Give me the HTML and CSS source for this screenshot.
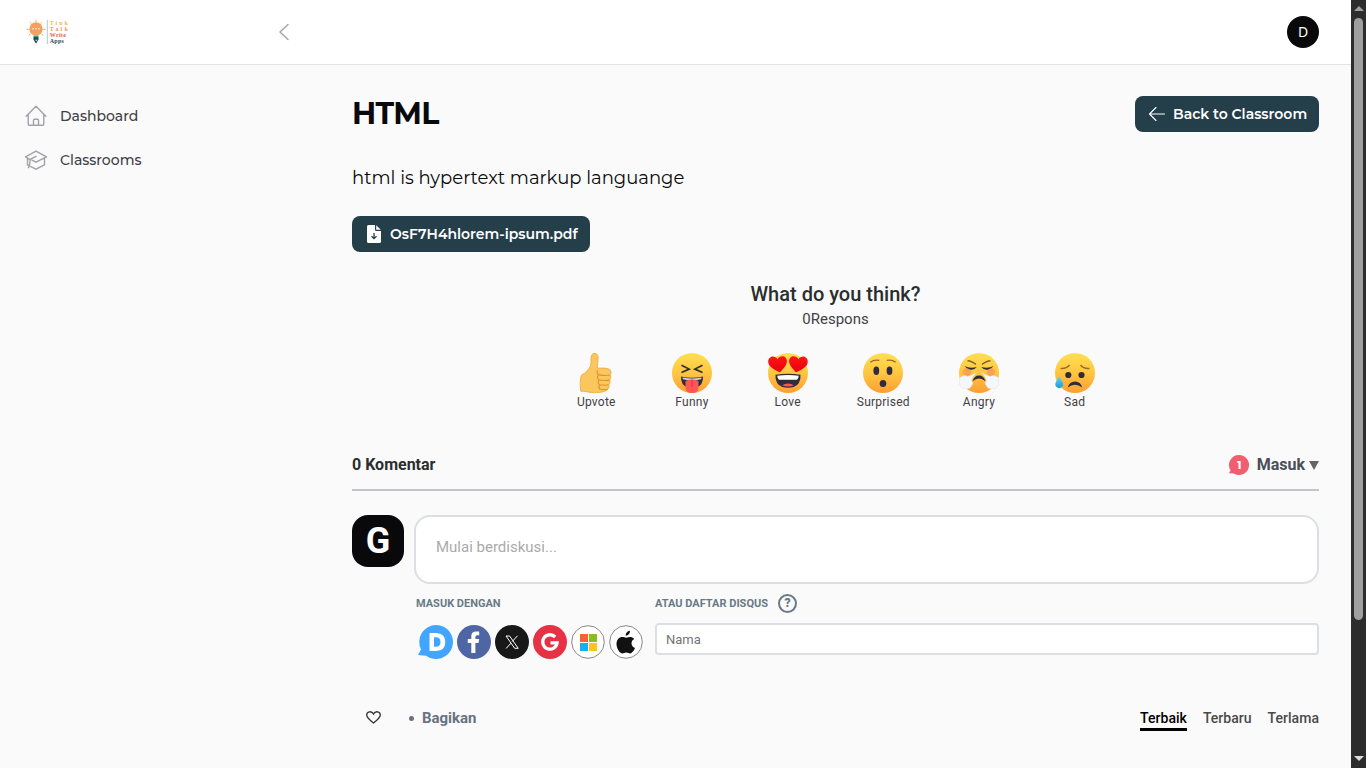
FILE: index.html
```html
<!DOCTYPE html>
<html lang="id">
<head>
<meta charset="utf-8">
<title>HTML</title>
<link rel="stylesheet" href="styles.css">
</head>
<body>
<svg width="0" height="0" class="defs" aria-hidden="true">
  <defs>
    <linearGradient id="face" x1="0" y1="0" x2="0" y2="1"><stop offset="0" stop-color="#ffdf52"/><stop offset=".5" stop-color="#ffc640"/><stop offset="1" stop-color="#ff9e35"/></linearGradient>
    <linearGradient id="heart" x1="0" y1="0" x2="0" y2="1"><stop offset="0" stop-color="#ff1515"/><stop offset="1" stop-color="#e9000d"/></linearGradient>
    <linearGradient id="drop" x1="0" y1="0" x2="0" y2="1"><stop offset="0" stop-color="#68d7f6"/><stop offset="1" stop-color="#159fd8"/></linearGradient>
  </defs>
</svg>
<div class="window">
  <div class="page">
    <header class="topbar">
      <svg class="logo" width="48" height="28" viewBox="0 0 48 28">
        <g stroke="#f1a35f" stroke-width="1"><path d="M10 1.800v2M4 4.200l1.300 1.300M16 4.200l-1.300 1.300M.5 11.300h2.200M17.200 11.300h2.300M2.700 17.200l1.700-1.200M17.300 17.200L15.600 16"/></g>
        <circle cx="10" cy="11" r="6.700" fill="#f6a05f"/>
        <path d="M7 15h6l-1 4H8z" fill="#f6a05f"/>
        <g fill="#fff"><circle cx="7.100" cy="10.800" r=".8"/><circle cx="10" cy="10.800" r=".8"/><circle cx="12.900" cy="10.800" r=".8"/></g>
        <path d="M7.500 19h5v2.300L10 25.800l-2.500-4.300z" fill="#264653"/>
        <path d="M7.500 18.600h5" stroke="#2a9d8f" stroke-width="1"/><circle cx="10.200" cy="22.200" r=".8" fill="#dce7e8"/>
        <path d="M21.300 2v24" stroke="#a5d1cb" stroke-width="1"/>
        <g class="logo-text"><text x="23.800" y="7" textLength="18" fill="#e9b95a">Tink</text><text x="23.800" y="13" textLength="18" fill="#f4975a">Talk</text><text x="23.800" y="19" textLength="16" fill="#e45f41">Write</text><text x="23.800" y="24.500" textLength="14" fill="#264653">Apps</text></g>
      </svg>
      <svg class="collapse" width="12" height="18" viewBox="0 0 12 18" fill="none" stroke="#a1a1aa" stroke-width="1.4" stroke-linecap="round" stroke-linejoin="round"><path d="M10 1.5L2 9l8 7.5"/></svg>
      <div class="user">D</div>
    </header>
    <div class="body">
      <nav class="sidebar">
        <a class="nav-item"><svg width="24" height="24" viewBox="0 0 24 24" fill="none" stroke="#a1a1aa" stroke-width="1.4" stroke-linecap="round" stroke-linejoin="round"><path d="M2.200 12.200L12 2.300l9.800 9.900M4.200 10.500v9.600q0 1.200 1.200 1.200h13.200q1.200 0 1.200-1.200v-9.600M9.500 21.200v-5q0-1 1-1h3q1 0 1 1v5"/></svg><span>Dashboard</span></a>
        <a class="nav-item"><svg width="24" height="24" viewBox="0 0 24 24" fill="none" stroke="#a1a1aa" stroke-width="1.4" stroke-linecap="round" stroke-linejoin="round"><path d="M1.500 8.800L12 3.200l10.500 5.600L12 14.200 8 12.200M1.500 8.800l4.200 2.500M3.500 10.300v6.300l1.200 1M20.500 10.300v6.500L12 21.200l-5.200-2.600M12 8.300l-4.500 2.400q-1.500.8-1.600 2.600l-.3 3.500q-.2 1.500-1.100 2.900"/></svg><span>Classrooms</span></a>
      </nav>
      <main class="main">
        <div class="title-row">
          <h1>HTML</h1>
          <a class="btn back"><svg width="18" height="16" viewBox="0 0 18 16" fill="none" stroke="#fff" stroke-width="1.1" stroke-linecap="round" stroke-linejoin="round"><path d="M8 1.500L1.500 8 8 14.500M1.500 8H16.500"/></svg><span>Back to Classroom</span></a>
        </div>
        <p class="intro">html is hypertext markup languange</p>
        <a class="btn file"><svg width="14" height="18" viewBox="0 0 14 18"><path fill="#fff" d="M1.500 0H8v4.500Q8 6 9.500 6H14v10.500q0 1.500-1.500 1.500h-11Q0 18 0 16.500V1.500Q0 0 1.500 0zM9.200.2L13.800 4.800H9.800q-.6 0-.6-.6z"/><path d="M7 8v5.500M4.500 11.200L7 13.700l2.500-2.500" fill="none" stroke="#243e4a" stroke-width="1.300"/></svg><span>OsF7H4hlorem-ipsum.pdf</span></a>

        <section class="reactions">
          <h2>What do you think?</h2>
          <div class="count">0Respons</div>
          <div class="reaction-list">
            <div class="reaction"><svg width="40" height="40" viewBox="0 0 40 40"><g transform="translate(1.200 .3)"><path d="M15.600.5c3-1.300 5.400.4 5.300 4-.1 3.700-1 7.300-.6 10.400 4.500-.2 9.300-.5 12.200 1.300 2 1.400 1.700 4.300.2 5.400 1.300 1.400 1.100 4-.4 5.100 1.100 1.500.7 3.800-.8 4.700.8 1.600.2 3.600-1 4.500-1.500 2.700-7.800 3.400-13.300 3.400-6.400 0-10.200-2-13.500-1.200C2.600 34.500 2.700 25.600 4.200 22c3.800-2 6.800-5.300 8.800-8.700 1.900-3.700-.6-10.900 2.600-12.800z" fill="#fbc65d" stroke="#e9a93b" stroke-width=".8"/><path d="M33 21.700q-5 1-11-.1-3-1.400-1.700-4.700M32.600 26.800q-5 .8-10.700-.1-2.600-2.200-.8-4.900M31.800 31.500q-4 .8-9.300 0-2.500-2.100-.8-4.600M30.800 36q-4 .5-7.900 0-2.300-1.800-.5-4.300" fill="none" stroke="#dd942c" stroke-width="1.100"/></g></svg><span>Upvote</span></div>
            <div class="reaction"><svg width="40" height="40" viewBox="0 0 40 40"><circle cx="20" cy="20" r="20" fill="url(#face)"/><path d="M9.500 12.200l7.700 3.900-7.700 3.500M30.500 12.200l-7.700 3.900 7.700 3.500" fill="none" stroke="#302c3b" stroke-width="1.700"/><path d="M9 23.400q11 2.600 22 0 .5 8.700-7 11.200h-8Q8.500 32.100 9 23.400z" fill="#302c3b"/><path d="M10.500 24.500q9.500 1.800 19 0l-.3 1.800q-9.200 1.700-18.400 0z" fill="#d8d8dc"/><path d="M13.500 28q6.500-3.500 13 0v6q0 6-6.500 6t-6.500-6z" fill="#ff5655"/><path d="M20 27v7" stroke="#c83f45" stroke-width="1.200"/></svg><span>Funny</span></div>
            <div class="reaction"><svg width="40" height="40" viewBox="0 0 40 40"><circle cx="20" cy="20" r="20" fill="url(#face)"/><g fill="url(#heart)"><path d="M12 19.200C7 17.100 1 14.300.3 9.500-.6 3.500 6.400 1 9.600 6.200 12.500 1.200 19.400 3 18.900 8.700c-.4 4.100-4.400 7.900-6.900 10.500z"/><path d="M28 19.200c5-2.100 11-4.900 11.700-9.700.9-6-6.100-8.500-9.300-3.300-2.900-5-9.800-3.200-9.300 2.500.4 4.100 4.400 7.900 6.900 10.500z"/></g><path d="M7.500 21.700q12.500-1.700 25 0Q33 34.500 20 34.800 7 34.500 7.500 21.700z" fill="#302c3b"/><path d="M9.300 22.700q10.700-1.300 21.400 0-.1 3-1.700 4H11q-1.600-1-1.700-4z" fill="#fff"/><path d="M14 32.200q6-3.200 12 0-6 2.600-12 0z" fill="#ff5655"/></svg><span>Love</span></div>
            <div class="reaction"><svg width="40" height="40" viewBox="0 0 40 40"><circle cx="20" cy="20" r="20" fill="url(#face)"/><g fill="#302c3b"><ellipse cx="13.300" cy="17.800" rx="2.900" ry="4.200"/><ellipse cx="26.500" cy="17.800" rx="2.900" ry="4.200"/><ellipse cx="20" cy="30.500" rx="3.300" ry="3.600"/></g><path d="M7.300 9.200q3.800-3 9-1.800M32.700 9.200q-3.800-3-9-1.800" fill="none" stroke="#9c6928" stroke-width="1.300"/></svg><span>Surprised</span></div>
            <div class="reaction"><svg width="40" height="40" viewBox="0 0 40 40"><circle cx="20" cy="20" r="20" fill="url(#face)"/><circle cx="8" cy="19" r="4" fill="#fb875d" opacity=".6"/><circle cx="32" cy="19" r="4" fill="#fb875d" opacity=".6"/><path d="M8.500 7.700q3.800.1 8.500 3.700M31.500 7.700q-3.800.1-8.500 3.700" fill="none" stroke="#87602a" stroke-width="1.400"/><path d="M5.500 13q5 2.700 12.300 1Q15 17.500 11 16.500 7.500 16 5.500 13zM34.500 13q-5 2.700-12.300 1Q25 17.500 29 16.500q3.500-.5 5.500-3.500z" fill="#302c3b"/><path d="M17.500 19.500q-5 3-9 4-2.500-2-5.500-.3Q-1 25 .7 28.500-1.500 32 2 33.800 3.500 37 6.500 35.500q4.700 1.100 6-2.800 2.500-2.200 0-5 .5-3.200 5-8.200zM22.500 19.500q5 3 9 4 2.500-2 5.500-.3 4 1.800 2.300 5.300 2.200 3.500-1.300 5.300-1.500 3.200-4.500 1.700-4.700 1.100-6-2.800-2.500-2.200 0-5-.5-3.200-5-8.200z" fill="#f4f7fb" stroke="#d8e0ea" stroke-width=".4"/><path d="M13.500 28.200q1.700-5.700 6.500-5.700t6.500 5.700q-6.500-5.400-13 0z" fill="#302c3b"/></svg><span>Angry</span></div>
            <div class="reaction"><svg width="40" height="40" viewBox="0 0 40 40"><circle cx="20" cy="20" r="20" fill="url(#face)"/><g fill="#302c3b"><circle cx="13.300" cy="22" r="3.100"/><circle cx="26.500" cy="22" r="3.100"/><path d="M12.700 34.600q1.700-6 7.300-6t7.300 6q-7.300-5.800-14.600 0z"/></g><path d="M5.500 15.500q5.900.5 9-3.500M34.500 15.500q-5.900.5-9-3.500" fill="none" stroke="#9c6928" stroke-width="1.400"/><path d="M4.500 23c-2.300 4-4.200 6.200-4.200 8.300 0 5.100 7.900 5.100 7.900 0 0-2.100-2.200-4.400-3.700-8.300z" fill="url(#drop)"/></svg><span>Sad</span></div>
          </div>
        </section>

        <section class="comments">
          <div class="comments-head">
            <strong>0 Komentar</strong>
            <div class="login"><svg class="badge" width="20" height="20" viewBox="0 0 20 20"><path d="M10 0a10 10 0 1 1-5.200 18.500L0 18.300l1.500-3A10 10 0 0 1 10 0z" fill="#f05f70"/><text x="10.400" y="13.800" text-anchor="middle" class="badge-number">1</text></svg><strong>Masuk</strong><i class="caret"></i></div>
          </div>
          <div class="composer">
            <div class="avatar">G</div>
            <div class="editor">Mulai berdiskusi...</div>
          </div>
          <div class="auth">
            <div class="connect">
              <h3><span>Masuk dengan</span></h3>
              <div class="providers">
                <svg width="36" height="34" viewBox="0 0 36 34"><path d="M19 0a17 17 0 1 1-10 30.700L1 30l3-5.500A17 17 0 0 1 19 0z" fill="#42a5ff"/><path fill-rule="evenodd" fill="#fff" d="M12.500 8H19q9.300.3 9.300 9T19 26h-6.500zM17 12.300v9.400h2q4.500 0 4.500-4.700T19 12.300z"/></svg>
                <svg width="34" height="34" viewBox="0 0 34 34"><circle cx="17" cy="17" r="17" fill="#4f66a5"/><path d="M14.300 28V18h-3.500v-4h3.500v-3q0-4.500 4.700-4.500h3.200v3.800H20q-1.600 0-1.600 1.700v2h3.800l-.6 4h-3.200v10z" fill="#fff"/></svg>
                <svg width="34" height="34" viewBox="0 0 34 34"><circle cx="17" cy="17" r="17" fill="#181818"/><path d="M11 11h3.600l8.600 12.300h-3.500zM22.500 10.800l-5.300 5.700M15.900 18.200l-4.800 5.300" fill="none" stroke="#fff" stroke-width="1"/></svg>
                <svg width="34" height="34" viewBox="0 0 34 34"><circle cx="17" cy="17" r="17" fill="#e63244"/><path d="M22.200 12A7.200 7.200 0 1 0 24.100 17.800H17.500" fill="none" stroke="#fff" stroke-width="3.300"/></svg>
                <svg width="34" height="34" viewBox="0 0 34 34"><circle cx="17" cy="17" r="16.300" fill="#fff" stroke="#888" stroke-width="1"/><path fill="#f1643a" d="M9 9h8v8H9z"/><path fill="#8cbd19" d="M18 9h8v8h-8z"/><path fill="#1cacf3" d="M9 18h8v8H9z"/><path fill="#ffc31e" d="M18 18h8v8h-8z"/></svg>
                <svg width="34" height="34" viewBox="0 0 34 34"><circle cx="17" cy="17" r="16.300" fill="#fff" stroke="#888" stroke-width="1"/><path transform="translate(-.3 -.3)" d="M21.200 6c.3 2.500-1.500 4.800-4.200 5-.2-2.400 1.700-4.700 4.200-5zM25.500 14.400c-4 2.200-3.300 7.500.8 9-1.300 3.200-3.200 5.300-4.900 5.300-1.400 0-2.100-.8-3.900-.8s-2.500.8-3.900.8c-3.200 0-8.400-9-4.200-14.400 2.600-3.300 6.200-1.900 8.100-1.200 2.300-.8 5.700-1.900 8 1.300z" fill="#111"/></svg>
              </div>
            </div>
            <div class="guest">
              <h3><span>atau daftar Disqus</span> <b class="help">?</b></h3>
              <input class="name" type="text" placeholder="Nama">
            </div>
          </div>
          <div class="tools">
            <div class="share"><svg class="like" width="15" height="13" viewBox="0 0 15 13"><path d="M7.500 12C3 8.500.7 6.500.7 4c0-3.800 5-4.400 6.800-1 1.800-3.400 6.800-2.800 6.800 1 0 2.500-2.300 4.500-6.800 8z" fill="none" stroke="#333" stroke-width="1.300"/></svg><i class="dot"></i><strong>Bagikan</strong></div>
            <div class="sort"><span class="active">Terbaik</span><span>Terbaru</span><span>Terlama</span></div>
          </div>
        </section>
      </main>
    </div>
  </div>
  <div class="scrollbar"><i class="up"></i><div class="thumb"></div><i class="down"></i></div>
</div>
</body>
</html>
```
FILE: styles.css
```css
* { box-sizing: border-box; }
body { margin: 0; background: #fafafa; color: #3f3f46; font-family: Roboto, "Liberation Sans", sans-serif; overflow: hidden; }
h1, h2, h3, p { margin: 0; }
svg { display: block; flex: none; overflow: visible; }
.defs { position: absolute; }
.window { display: flex; height: 768px; }
.page { flex: 1; min-width: 0; }

.topbar { height: 65px; display: flex; align-items: center; padding: 0 32px 1px 26px; background: #fff; border-bottom: 1px solid #e4e4e7; }
.logo-text { font: bold 6px "Liberation Serif", serif; stroke-width: 0; }
.collapse { margin-left: 204px; }
.user { margin-left: auto; width: 32px; height: 32px; border-radius: 50%; background: #09090b; color: #fff; display: grid; place-items: center; font: 14px/1 "Noto Sans", sans-serif; }

.body { display: flex; }
.sidebar { width: 320px; padding: 39px 24px; display: flex; flex-direction: column; gap: 20px; }
.nav-item { display: flex; align-items: center; gap: 12px; height: 24px; font: 500 14px/24px Montserrat, Inter, sans-serif; color: #3f3f46; }
.main { flex: 1; min-width: 0; padding: 31px 32px 0; }
.title-row { display: flex; justify-content: space-between; height: 36px; }
h1 { font: 700 30px/36px Montserrat, Inter, sans-serif; letter-spacing: -.75px; color: #09090b; }
.btn { display: flex; align-items: center; height: 36px; border-radius: 8px; background: #243e4a; color: #fff; font: 600 14px/20px Montserrat, Inter, sans-serif; white-space: nowrap; }
.back { width: 184px; padding-left: 13px; gap: 7px; }
.file { width: 238px; padding-left: 15px; gap: 9px; }
.intro { margin: 32px 0 24px; font: 400 18px/28px Montserrat, Inter, sans-serif; color: #09090b; white-space: nowrap; }

.reactions { padding-top: 30px; text-align: center; }
.reactions h2 { font-size: 20px; line-height: 24px; font-weight: 500; color: #2a2e2e; }
.count { font-size: 15px; line-height: 20px; margin-top: 3px; }
.reaction-list { width: 574px; margin: 24px auto 0; display: grid; grid-template-columns: repeat(6, 1fr); }
.reaction { display: flex; flex-direction: column; align-items: center; font-size: 12px; line-height: 18px; letter-spacing: .24px; }

.comments-head { display: flex; justify-content: space-between; margin-top: 38px; height: 42px; padding-top: 4px; border-bottom: 2px solid #c2c6cc; font-size: 16px; line-height: 24px; color: #2a2e2e; }
.login { display: flex; height: 24px; align-items: center; color: #494e58; }
.login strong { margin: 0 4px 0 8px; }
.badge { margin-bottom: 1px; }
.badge-number { font: 800 10px Montserrat, Inter, sans-serif; fill: #fff; }
.caret { border: 5px solid transparent; border-top: 9px solid #656565; border-bottom: 0; }
.composer { display: flex; gap: 10px; margin-top: 24px; }
.avatar { width: 52px; height: 52px; border-radius: 16px; background: #09090b; color: #fff; display: grid; place-items: center; font: 700 36px/1 Roboto, sans-serif; }
.editor { flex: 1; height: 69px; border: 2px solid #dbdfe4; border-radius: 16px; background: #fff; padding: 20px; font-size: 15px; line-height: 20px; color: #aaa; }
.auth { display: flex; margin: 9px 0 0 64px; }
.connect { width: 239px; }
.auth h3 { display: flex; align-items: center; height: 20px; font-size: 11px; line-height: 20px; font-weight: 700; color: #687a86; text-transform: uppercase; white-space: nowrap; }
.auth h3 span { padding-top: 1px; }
.providers { display: flex; gap: 4px; margin: 12px 0 0 1px; }
.guest { flex: 1; }
.help { margin-left: 10px; width: 19px; height: 19px; border: 2px solid #687a86; border-radius: 50%; display: grid; place-items: center; font-size: 12px; line-height: 15px; }
.name { display: block; width: 100%; height: 32px; margin-top: 10px; border: 2px solid #dbdfe4; border-radius: 4px; padding: 0 9px; font: 13px Roboto, sans-serif; background: #fff; }
.name::placeholder { color: #757575; }
.tools { display: flex; justify-content: space-between; margin-top: 49px; height: 24px; line-height: 20px; }
.share { display: flex; align-items: center; height: 20px; padding-left: 14px; font-size: 15px; color: #687280; }
.share strong { font-weight: 700; letter-spacing: -.05px; }
.like { margin-bottom: 1px; }
.dot { width: 5px; height: 5px; margin: 1px 8px 0 28px; border-radius: 50%; background: #687280; }
.sort { display: flex; gap: 16px; font-size: 14px; font-weight: 500; color: #494949; }
.sort span { height: 23px; letter-spacing: .03px; }
.sort .active { color: #000; border-bottom: 3px solid #000; }

.scrollbar { width: 15px; background: #2c2c2c; display: flex; flex-direction: column; align-items: center; padding: 6px 0 7px; }
.up { border: 5px solid transparent; border-bottom-color: #9f9f9f; border-top: 0; }
.down { border: 5px solid transparent; border-top-color: #ddd; border-bottom: 0; margin-top: auto; }
.thumb { width: 9px; height: 602px; margin-top: 7px; border-radius: 5px; background: #9f9f9f; }
```
